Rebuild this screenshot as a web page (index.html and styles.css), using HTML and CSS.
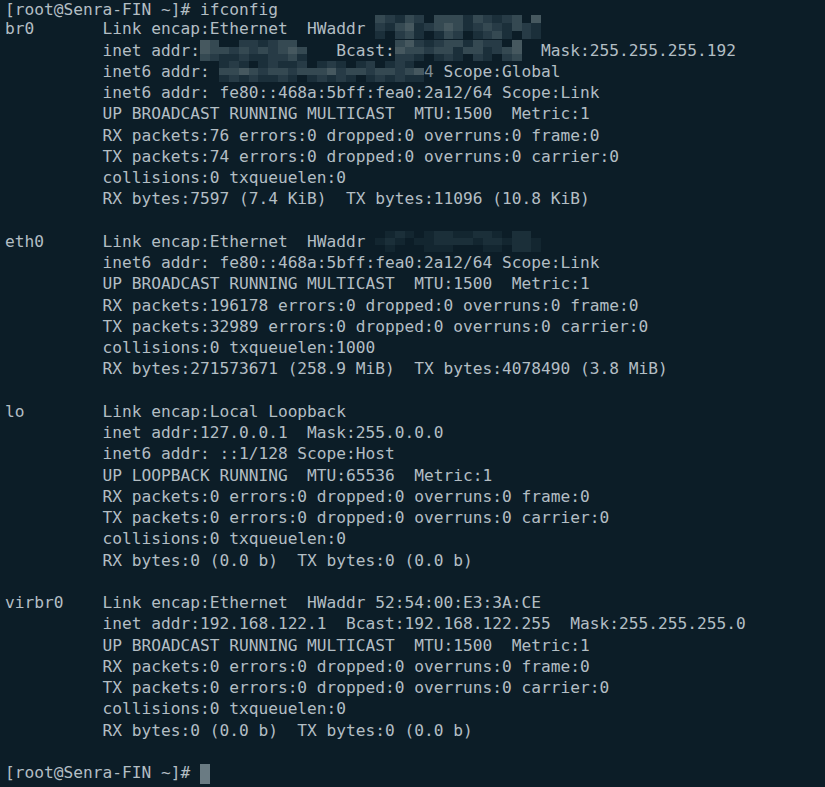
FILE: index.html
```html
<!DOCTYPE html>
<html>
<head>
<meta charset="utf-8">
<link rel="stylesheet" href="styles.css">
</head>
<body>
<div class="term">
<div class="ln first">[root@Senra-FIN ~]# ifconfig</div>
<div class="ln">br0       Link encap:Ethernet  HWaddr <span class="mz n17 up"><i class="c"></i><i class="b"></i><i class="a"></i><i class="c"></i><i class="b"></i><i></i><i class="c"></i><i class="c"></i><i class="c"></i><i class="a"></i><i class="c"></i><i class="b"></i><i class="a"></i><i class="b"></i><i class="c"></i><i></i><i class="d"></i><i class="b"></i><i class="a"></i><i class="c"></i><i class="d"></i><i class="a"></i><i class="b"></i><i class="c"></i><i class="d"></i><i class="c"></i><i class="a"></i><i class="b"></i><i class="c"></i><i class="b"></i><i class="a"></i><i class="c"></i><i class="b"></i><i class="a"></i><i class="a"></i><i></i><i class="b"></i><i class="c"></i><i class="a"></i><i></i><i class="a"></i><i class="c"></i><i class="b"></i><i></i><i class="a"></i><i class="b"></i><i class="c"></i><i class="a"></i><i></i><i class="b"></i><i class="a"></i></span></div>
<div class="ln">          inet addr:<span class="mz n12"><i class="d"></i><i class="c"></i><i></i><i></i><i class="b"></i><i class="b"></i><i class="a"></i><i class="b"></i><i class="c"></i><i class="c"></i><i></i><i></i><i class="d"></i><i class="c"></i><i class="c"></i><i class="b"></i><i class="c"></i><i class="b"></i><i class="c"></i><i class="b"></i><i class="c"></i><i class="d"></i><i class="c"></i><i></i><i class="c"></i><i class="b"></i><i class="a"></i><i class="a"></i><i class="b"></i><i class="a"></i><i class="a"></i><i class="b"></i><i class="b"></i><i class="c"></i><i class="a"></i><i></i></span>  Bcast:<span class="mz n13"><i class="c"></i><i class="d"></i><i class="b"></i><i class="a"></i><i class="b"></i><i class="c"></i><i class="c"></i><i class="a"></i><i class="c"></i><i class="b"></i><i class="b"></i><i></i><i class="d"></i><i class="d"></i><i class="c"></i><i class="c"></i><i class="b"></i><i class="c"></i><i class="c"></i><i class="a"></i><i class="c"></i><i class="c"></i><i class="a"></i><i class="b"></i><i class="c"></i><i class="d"></i><i class="b"></i><i class="b"></i><i class="a"></i><i></i><i class="a"></i><i class="b"></i><i class="a"></i><i></i><i class="b"></i><i class="a"></i><i></i><i class="b"></i><i class="c"></i></span>  Mask:255.255.255.192</div>
<div class="ln">          inet6 addr: <span class="mz n21"><i class="a"></i><i class="b"></i><i class="a"></i><i></i><i class="a"></i><i class="b"></i><i class="a"></i><i class="a"></i><i class="b"></i><i></i><i class="a"></i><i class="b"></i><i class="a"></i><i></i><i class="a"></i><i class="b"></i><i></i><i class="a"></i><i class="b"></i><i class="a"></i><i></i><i class="c"></i><i class="c"></i><i class="d"></i><i class="c"></i><i class="b"></i><i class="c"></i><i class="c"></i><i class="b"></i><i class="c"></i><i class="c"></i><i class="c"></i><i class="d"></i><i class="b"></i><i class="c"></i><i class="c"></i><i class="b"></i><i class="c"></i><i class="c"></i><i class="b"></i><i class="c"></i><i class="d"></i><i class="a"></i><i class="b"></i><i class="a"></i><i class="b"></i><i class="a"></i><i class="a"></i><i class="b"></i><i class="a"></i><i></i><i class="a"></i><i class="b"></i><i class="a"></i><i class="b"></i><i class="a"></i><i></i><i class="a"></i><i class="b"></i><i class="a"></i><i class="b"></i><i class="a"></i><i class="a"></i></span><span class="dim">4</span> Scope:Global</div>
<div class="ln">          inet6 addr: fe80::468a:5bff:fea0:2a12/64 Scope:Link</div>
<div class="ln">          UP BROADCAST RUNNING MULTICAST  MTU:1500  Metric:1</div>
<div class="ln">          RX packets:76 errors:0 dropped:0 overruns:0 frame:0</div>
<div class="ln">          TX packets:74 errors:0 dropped:0 overruns:0 carrier:0</div>
<div class="ln">          collisions:0 txqueuelen:0</div>
<div class="ln">          RX bytes:7597 (7.4 KiB)  TX bytes:11096 (10.8 KiB)</div>
<div class="ln"></div>
<div class="ln">eth0      Link encap:Ethernet  HWaddr <span class="mz n17 faint"><i></i><i class="a"></i><i class="b"></i><i class="a"></i><i></i><i class="a"></i><i class="b"></i><i class="b"></i><i class="a"></i><i class="a"></i><i class="b"></i><i class="b"></i><i class="a"></i><i></i><i class="b"></i><i class="b"></i><i></i><i class="a"></i><i class="b"></i><i class="a"></i><i></i><i class="a"></i><i class="a"></i><i class="b"></i><i class="b"></i><i class="b"></i><i class="b"></i><i class="a"></i><i class="b"></i><i class="b"></i><i class="a"></i><i class="b"></i><i class="b"></i><i class="a"></i><i></i><i class="a"></i><i></i><i></i><i></i><i class="a"></i><i class="a"></i><i class="a"></i><i></i><i></i><i></i><i class="a"></i><i class="a"></i><i></i><i class="b"></i><i class="b"></i><i class="a"></i></span></div>
<div class="ln">          inet6 addr: fe80::468a:5bff:fea0:2a12/64 Scope:Link</div>
<div class="ln">          UP BROADCAST RUNNING MULTICAST  MTU:1500  Metric:1</div>
<div class="ln">          RX packets:196178 errors:0 dropped:0 overruns:0 frame:0</div>
<div class="ln">          TX packets:32989 errors:0 dropped:0 overruns:0 carrier:0</div>
<div class="ln">          collisions:0 txqueuelen:1000</div>
<div class="ln">          RX bytes:271573671 (258.9 MiB)  TX bytes:4078490 (3.8 MiB)</div>
<div class="ln"></div>
<div class="ln">lo        Link encap:Local Loopback</div>
<div class="ln">          inet addr:127.0.0.1  Mask:255.0.0.0</div>
<div class="ln">          inet6 addr: ::1/128 Scope:Host</div>
<div class="ln">          UP LOOPBACK RUNNING  MTU:65536  Metric:1</div>
<div class="ln">          RX packets:0 errors:0 dropped:0 overruns:0 frame:0</div>
<div class="ln">          TX packets:0 errors:0 dropped:0 overruns:0 carrier:0</div>
<div class="ln">          collisions:0 txqueuelen:0</div>
<div class="ln">          RX bytes:0 (0.0 b)  TX bytes:0 (0.0 b)</div>
<div class="ln"></div>
<div class="ln">virbr0    Link encap:Ethernet  HWaddr 52:54:00:E3:3A:CE</div>
<div class="ln">          inet addr:192.168.122.1  Bcast:192.168.122.255  Mask:255.255.255.0</div>
<div class="ln">          UP BROADCAST RUNNING MULTICAST  MTU:1500  Metric:1</div>
<div class="ln">          RX packets:0 errors:0 dropped:0 overruns:0 frame:0</div>
<div class="ln">          TX packets:0 errors:0 dropped:0 overruns:0 carrier:0</div>
<div class="ln">          collisions:0 txqueuelen:0</div>
<div class="ln">          RX bytes:0 (0.0 b)  TX bytes:0 (0.0 b)</div>
<div class="ln"></div>
<div class="ln">[root@Senra-FIN ~]# <span class="cur"></span></div>
</div>
</body>
</html>
```
FILE: styles.css
```css
html, body {
  margin: 0;
  padding: 0;
  background: #0c1d27;
  height: 100%;
  overflow: hidden;
}

.term {
  font-family: "DejaVu Sans Mono", "Liberation Mono", monospace;
  font-size: 16.2px;
  color: #b3bec4;
  padding-left: 5px;
}

.ln {
  white-space: pre;
  height: 21.25px;
  line-height: 21.25px;
}

.ln.first {
  height: 18.4px;
  line-height: 20px;
}

.mz {
  display: inline-grid;
  vertical-align: top;
  height: 21px;
  grid-template-rows: repeat(3, 7px);
  grid-auto-flow: row;
}

.mz.up {
  height: 24px;
  grid-template-rows: repeat(3, 8px);
  margin: -3px 0 -3px;
}

.n12 { width: 12ch; grid-template-columns: repeat(12, 1fr); }
.n13 { width: 13ch; grid-template-columns: repeat(13, 1fr); }
.n17 { width: 17ch; grid-template-columns: repeat(17, 1fr); }
.n21 { width: 21ch; grid-template-columns: repeat(21, 1fr); }

.mz i { display: block; }
.mz .a { background: #1b2f3a; }
.mz .b { background: #273b46; }
.mz .c { background: #354952; }
.mz .d { background: #46585f; }

.mz.faint .a { background: #132630; }
.mz.faint .b { background: #1b2f39; }

.dim { color: #7d8b92; }

.cur {
  display: inline-block;
  width: 10px;
  height: 20px;
  margin: 2px 0 -2px;
  vertical-align: top;
  background: #6a7b83;
}
```
